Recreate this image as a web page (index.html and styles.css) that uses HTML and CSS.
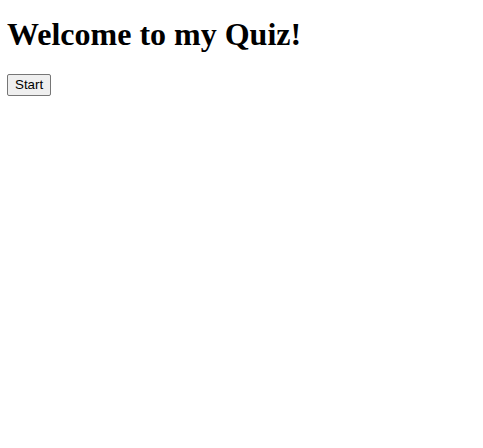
FILE: index.html
```html
<!DOCTYPE html>
<html>
<head>
<meta charset="utf-8">
<link rel="stylesheet" href="styles.css">
</head>
<body class="page">
<h1 class="title">Welcome to my Quiz!</h1>
<button class="start-btn">Start</button>
</body>
</html>
```

FILE: styles.css
```css
.page {
  margin: 7px;
  font-family: "Liberation Serif", serif;
  background: #fff;
  color: #000;
}
.title {
  font-family: "Liberation Serif", serif;
  font-size: 32px;
  font-weight: bold;
  margin: 9px 0 21px;
  line-height: normal;
}
.start-btn {
  font-family: "Liberation Sans", Arial, sans-serif;
  font-size: 13.33px;
  padding: 2px 7px 3px;
  border: 1px solid #767676;
  border-radius: 2px;
  background: #efefef;
  color: #000;
}
```
